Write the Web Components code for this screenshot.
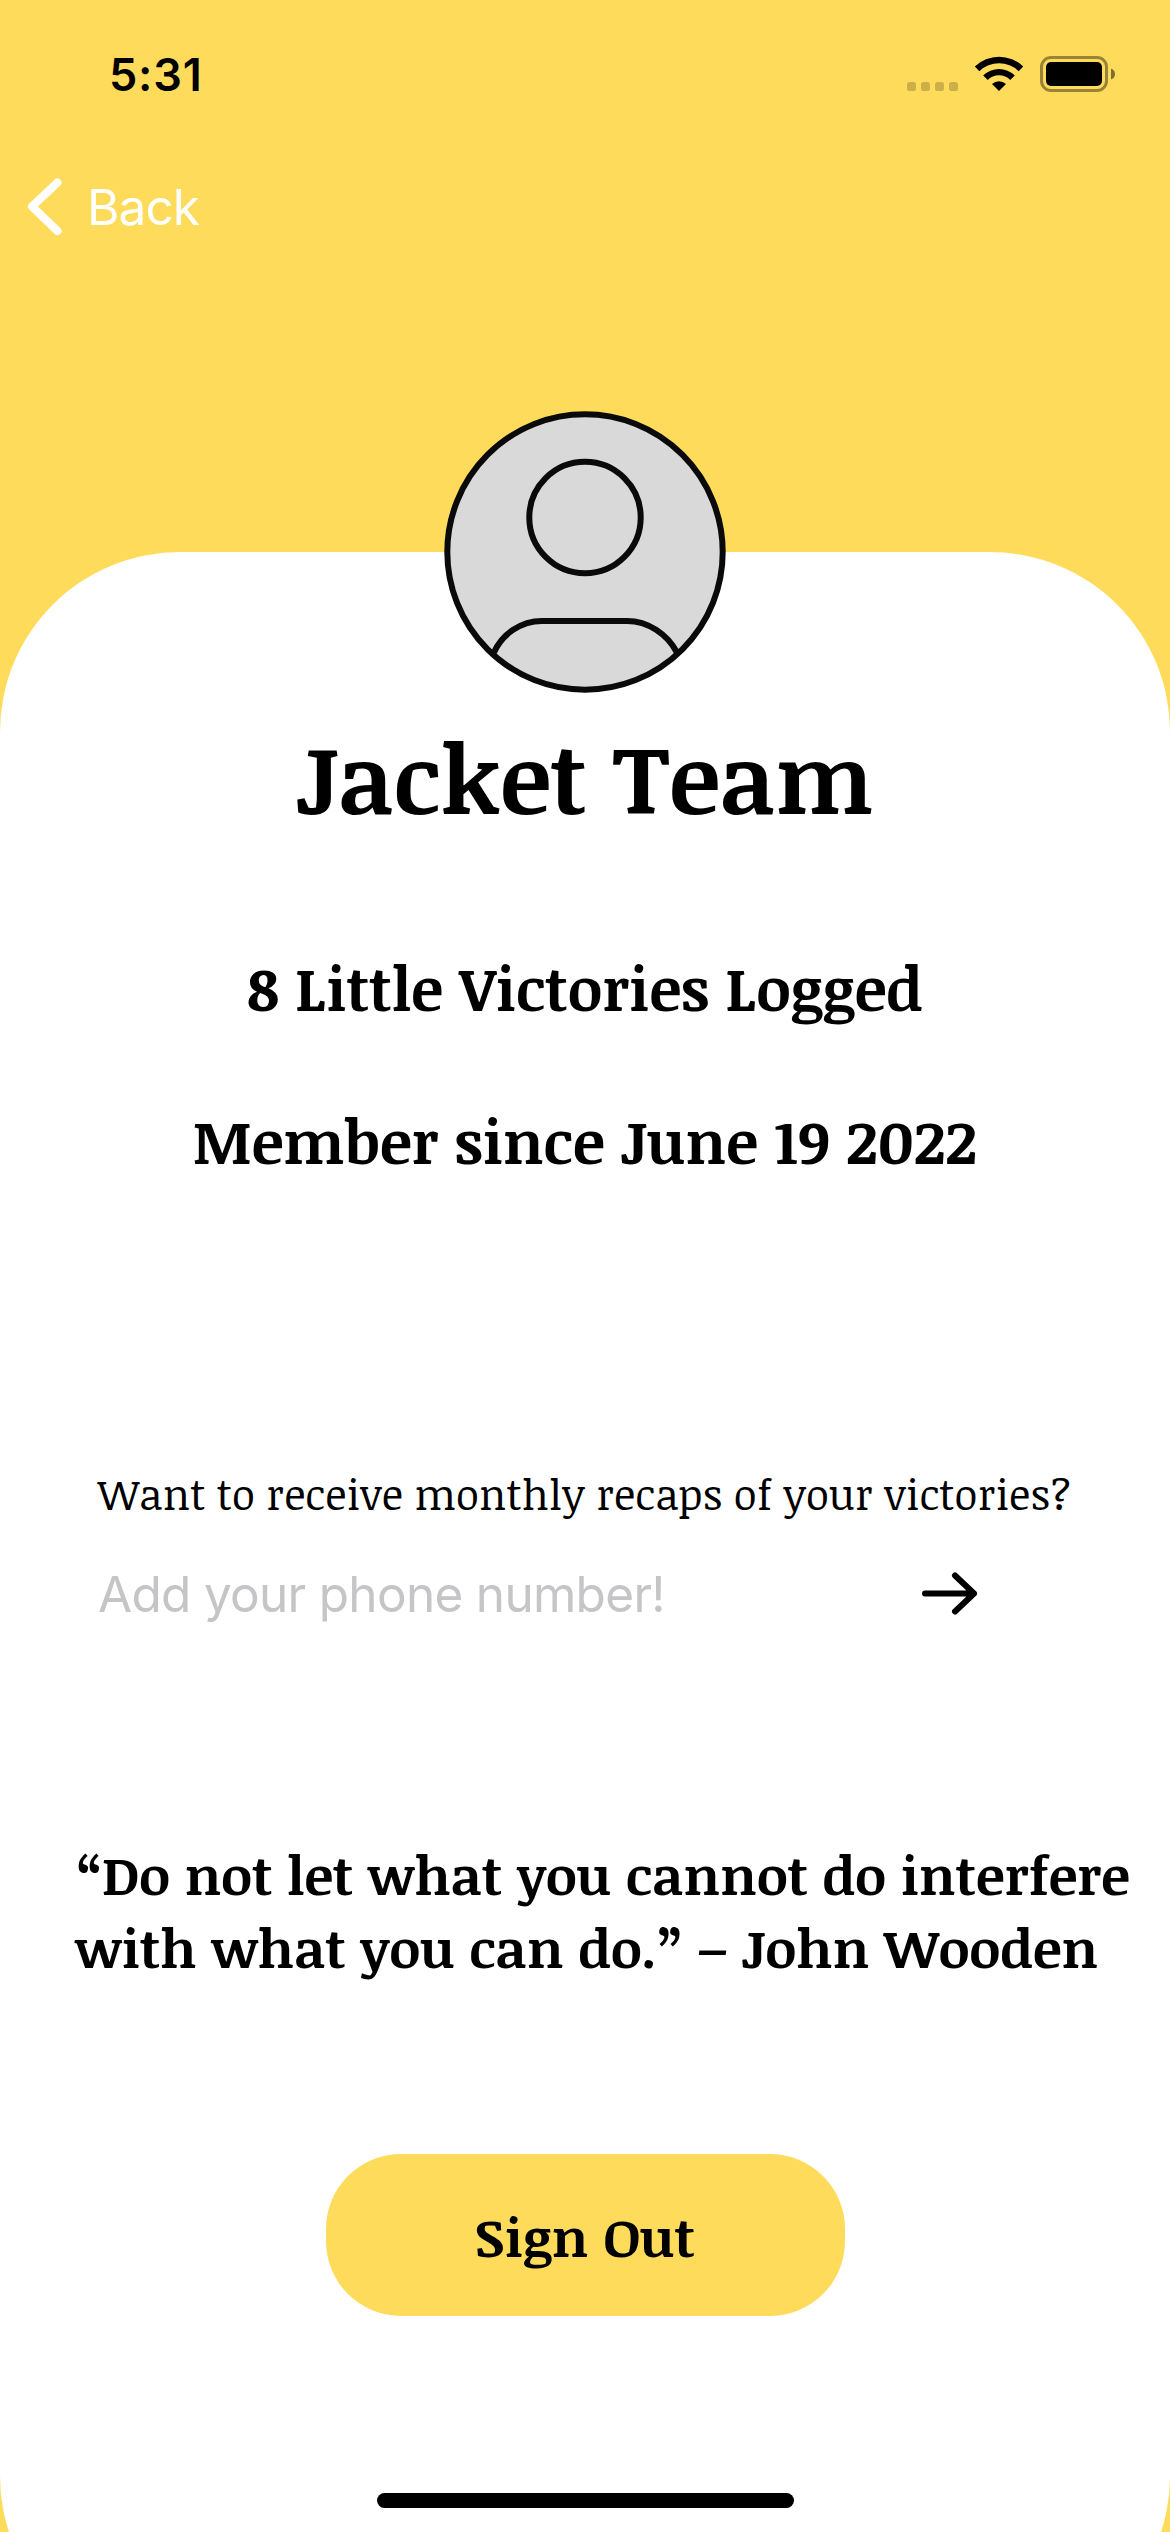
<!DOCTYPE html>
<html lang="en">
<head>
<meta charset="utf-8">
<title>Profile</title>
<style>
  html, body { margin: 0; padding: 0; }
  body { width: 1170px; height: 2532px; overflow: hidden; }
</style>
</head>
<body>
<profile-screen>
  <status-bar slot="status" time="5:31"></status-bar>
  <nav-back slot="nav">Back</nav-back>
  <user-avatar slot="avatar"></user-avatar>
  <profile-name>Jacket Team</profile-name>
  <profile-stat>8 Little Victories Logged</profile-stat>
  <profile-stat>Member since June 19 2022</profile-stat>
  <recap-signup placeholder="Add your phone number!">Want to receive monthly recaps of your victories?</recap-signup>
  <daily-quote>“Do not let what you cannot do interfere<br>with what you can do.” – John Wooden</daily-quote>
  <pill-button>Sign Out</pill-button>
  <home-indicator slot="home"></home-indicator>
</profile-screen>
<script>
const define = (name, html, setup) => customElements.define(name, class extends HTMLElement {
  constructor() {
    super();
    this.attachShadow({ mode: 'open' }).innerHTML = html;
  }
  connectedCallback() { if (setup) setup(this, this.shadowRoot); }
});

define('profile-screen', `
  <style>
    :host { --brand: #ffdb5c; --serif: "Noticia Text", "Noto Serif", serif; --sans: Inter, "Liberation Sans", sans-serif;
      display: flex; flex-direction: column; width: 1170px; height: 2532px; overflow: hidden;
      background: var(--brand); color: #000; }
    header { flex: none; height: 552px; }
    main { flex: none; height: 2104px; border-radius: 180px; background: #fff;
      display: flex; flex-direction: column; align-items: center; }
    .avatar { height: 282px; margin-top: -141px; padding-bottom: 18px; }
    .home { position: absolute; left: 377px; top: 2493px; }
  </style>
  <header><slot name="status"></slot><slot name="nav"></slot></header>
  <main><div class="avatar"><slot name="avatar"></slot></div><slot></slot></main>
  <div class="home"><slot name="home"></slot></div>`);

define('status-bar', `
  <style>
    :host { display: flex; align-items: flex-start; justify-content: space-between; height: 178px; box-sizing: border-box; padding: 47px 54px 0 109px; }
    .time { font: 600 45px/56px var(--sans); letter-spacing: .8px; }
    .icons { display: flex; margin-top: 7px; }
  </style>
  <span class="time"></span>
  <svg class="icons" width="210" height="40" viewBox="0 0 210 40">
    <g fill-opacity=".2"><rect x="1" y="28" width="9" height="9" rx="2.6"/><rect x="15" y="28" width="9" height="9" rx="2.6"/><rect x="29" y="28" width="9" height="9" rx="2.6"/><rect x="43" y="28" width="9" height="9" rx="2.6"/></g>
    <g transform="translate(93 37)">
      <path d="M0 0L-7 -7A10.4 10.4 0 0 1 7 -7Z"/>
      <path d="M-11.2 -11A15.8 15.8 0 0 1 11.2 -11L15.8 -15.6A22.8 22.8 0 0 0 -15.8 -15.6Z"/>
      <path d="M-19.6 -19.8A28.3 28.3 0 0 1 19.6 -19.8L24.2 -24.6A35 35 0 0 0 -24.2 -24.6Z"/>
    </g>
    <rect x="135.5" y="3.5" width="65" height="33" rx="9.5" fill="none" stroke="#000" stroke-opacity=".4" stroke-width="3"/>
    <rect x="140" y="8" width="56" height="24" rx="5"/>
    <path d="M205 14.5Q209 16 209 20Q209 24 205 25.5Z" fill-opacity=".5"/>
  </svg>`, (el, r) => { r.querySelector('.time').textContent = el.getAttribute('time'); });

define('nav-back', `
  <style>
    :host { display: flex; align-items: center; height: 58px; padding-left: 26px; color: #fff; font: 400 49.5px/58px var(--sans); }
    svg { margin-right: 24px; }
    span { letter-spacing: -.9px; }
  </style>
  <svg width="37" height="58" viewBox="0 0 37 58"><path d="M31.5 4.5L6 28.5L31.5 53" fill="none" stroke="#fff" stroke-width="8" stroke-linecap="round" stroke-linejoin="round"/></svg>
  <span><slot></slot></span>`);

define('user-avatar', `
  <style>:host { display: block; width: 282px; height: 282px; } svg { display: block; }</style>
  <svg width="282" height="282" viewBox="0 0 282 282" fill="none" stroke="#0a0a0a" stroke-width="6">
    <circle cx="141" cy="141" r="137.7" fill="#d9d9d9"/>
    <circle cx="141" cy="106.5" r="55.7"/>
    <path d="M50 241.5C58 223 77 210 98 210H183C204 210 223 223 233 241.5"/>
  </svg>`);

define('profile-name', `
  <style>:host { display: block; height: 131px; font: 700 96px/131px var(--serif); margin-bottom: 104px; }</style><slot></slot>`);

define('profile-stat', `
  <style>:host { display: block; height: 82px; font: 700 60px/82px var(--serif); margin-bottom: 71px; }</style><slot></slot>`);

define('recap-signup', `
  <style>
    :host { display: flex; flex-direction: column; align-self: stretch; margin-top: 213px; padding-left: 98px; }
    .ask { font: 400 42px/57px var(--serif); white-space: nowrap; }
    .field { display: flex; align-items: center; justify-content: space-between; width: 880px; height: 60px; margin-top: 42px; }
    .ph { color: #c5c5c7; font: 400 49.5px/60px var(--sans); letter-spacing: -.7px; white-space: nowrap; }
  </style>
  <div class="ask"><slot></slot></div>
  <div class="field"><span class="ph"></span>
    <svg width="56" height="46" viewBox="0 0 56 46" fill="none" stroke="#000" stroke-width="6" stroke-linecap="round" stroke-linejoin="round"><path d="M3 22.5H52M33 4.5L52 22.5L33 40.5"/></svg>
  </div>`, (el, r) => { r.querySelector('.ph').textContent = el.getAttribute('placeholder'); });

define('daily-quote', `
  <style>:host { display: block; align-self: stretch; height: 147px; margin: 214px 0 169px; padding-left: 75px; font: 700 54px/73.4px var(--serif); white-space: nowrap; }</style><slot></slot>`);

define('pill-button', `
  <style>
    :host { display: block; }
    button { display: flex; align-items: center; justify-content: center; width: 519px; height: 162px; padding: 2px 0 0; box-sizing: border-box; border: 0; border-radius: 75px;
      background: var(--brand); color: #000; font: 700 54px/73px var(--serif); }
  </style>
  <button type="button"><slot></slot></button>`);

define('home-indicator', `
  <style>:host { display: block; width: 417px; height: 15px; border-radius: 8px; background: #000; }</style>`);
</script>
</body>
</html>
